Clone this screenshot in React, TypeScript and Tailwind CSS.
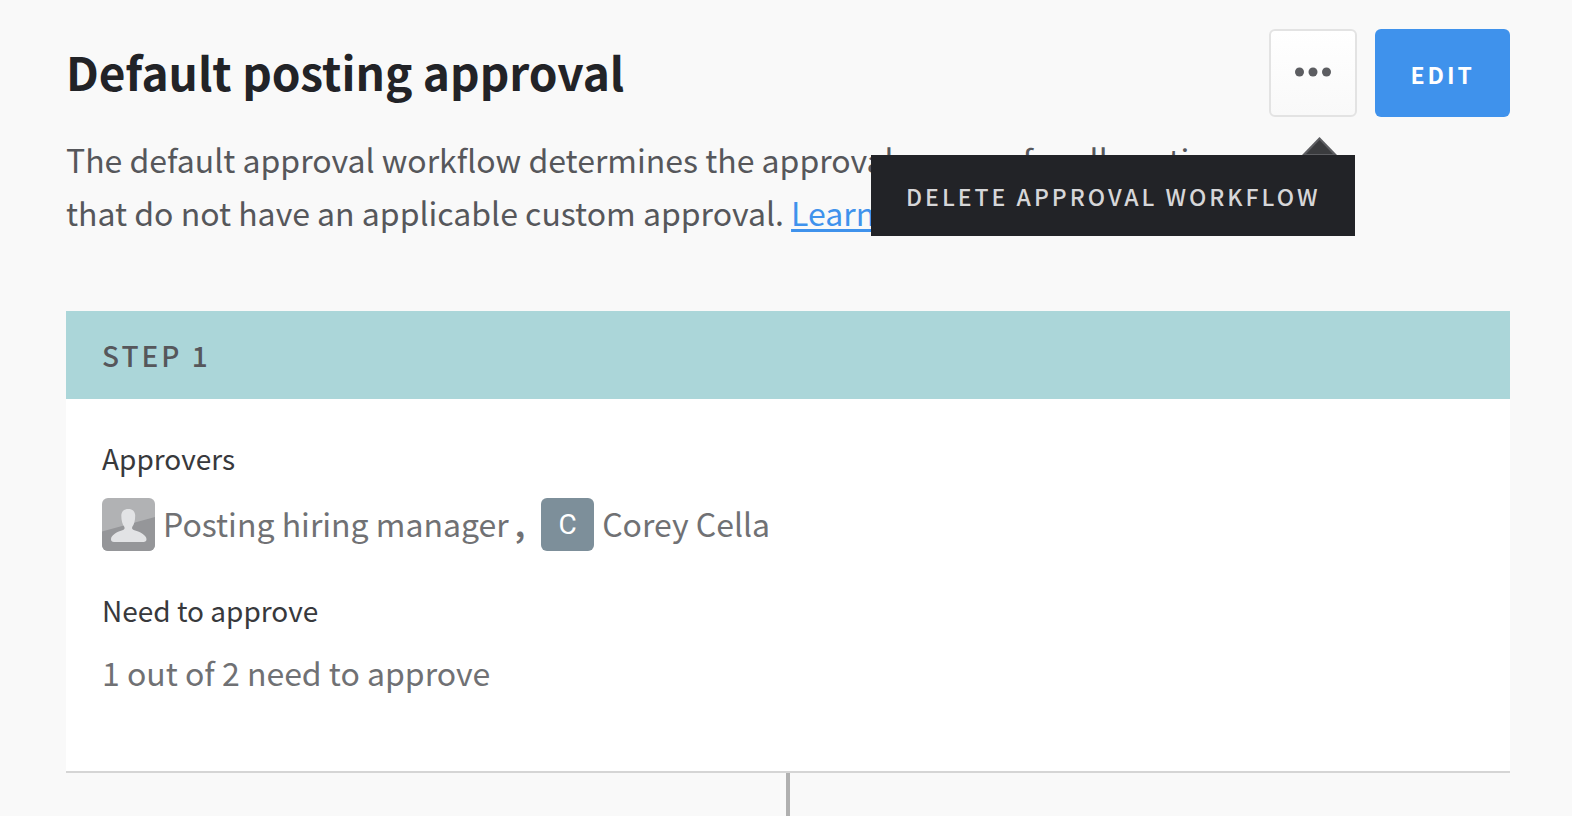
import { useState } from "react";

interface Approver {
  name: string;
  initial?: string;
}

interface StepProps {
  index: number;
  approvers: Approver[];
  required: number;
}

const APPROVERS: Approver[] = [
  { name: "Posting hiring manager" },
  { name: "Corey Cella", initial: "C" },
];

function Avatar({ initial }: { initial?: string }) {
  if (initial) {
    return (
      <span className="w-[53px] h-[53px] rounded-md bg-[#7d8f9a] text-white font-[Roboto,sans-serif] text-[28px] leading-none flex items-center justify-center shrink-0">
        {initial}
      </span>
    );
  }

  return (
    <svg className="w-[53px] h-[53px] rounded-md shrink-0" viewBox="0 0 53 53" aria-hidden="true">
      <rect width="53" height="53" fill="#b1b2b4" />
      <path d="M0 33.5L53 19V53H0Z" fill="#959699" />
      <path
        d="M26.3 11C30.6 11 33.2 13.6 33.2 17.6C33.2 22.4 32.3 26.6 30.2 29C29.6 30.8 30.6 31.6 32.4 32.2C38.6 33.9 44.5 37.3 44.5 41.2C44.5 43 43.4 44 41.4 44H12C10 44 9 43 9 41.2C9 37.3 14.4 33.9 20.4 32.2C22.2 31.6 23 30.8 22.4 29C20.3 26.6 19.3 22.4 19.3 17.6C19.3 13.6 22 11 26.3 11Z"
        fill="#e2e3e5"
      />
    </svg>
  );
}

function Step({ index, approvers, required }: StepProps) {
  return (
    <section className="bg-white border-b-2 border-[#d5d5d5]">
      <h2 className="bg-[#abd6d9] px-9 h-[88px] flex items-center text-[28px] leading-9 font-medium tracking-[3px] text-[#56575b]">
        STEP {index}
      </h2>
      <div className="px-9 pt-[39px] pb-[72px]">
        <h3 className="text-[28px] leading-10 text-[#38393c]">Approvers</h3>
        <ul className="mt-5 flex items-center gap-4 text-[32px] text-[#707174]">
          {approvers.map((approver, i) => (
            <li key={approver.name} className="flex items-center gap-2">
              <Avatar initial={approver.initial} />
              <span className="pb-1 leading-[48px]">
                {approver.name}
                {i < approvers.length - 1 && <span className="ml-1.5 font-bold">,</span>}
              </span>
            </li>
          ))}
        </ul>
        <h3 className="mt-[39px] text-[28px] leading-10 text-[#38393c]">Need to approve</h3>
        <p className="mt-4 text-[32px] leading-[53px] text-[#707174]">
          {required} out of {approvers.length} need to approve
        </p>
      </div>
    </section>
  );
}

export default function App() {
  const [open, setOpen] = useState(true);

  return (
    <main className="min-h-screen bg-[#f9f9f9] pl-[66px] pr-[62px] pt-[29px] font-['Noto_Sans_CJK_SC','Open_Sans',sans-serif]">
      <header className="flex items-start justify-between">
        <h1 className="h-[88px] pb-1 flex items-center text-[46px] leading-[64px] font-bold text-[#222327]">
          Default posting approval
        </h1>
        <div className="flex gap-[18px]">
          <div className="relative">
            <button
              type="button"
              aria-label="More actions"
              aria-expanded={open}
              onClick={() => setOpen(!open)}
              className="w-[88px] h-[88px] pb-0.5 rounded-md border-2 border-[#e3e3e3] bg-linear-to-b from-white to-[#f9f9f9] flex items-center justify-center"
            >
              <svg width="36" height="10" viewBox="0 0 36 10" fill="#5c5d61">
                <circle cx="4.5" cy="5" r="4.5" />
                <circle cx="18" cy="5" r="4.5" />
                <circle cx="31.5" cy="5" r="4.5" />
              </svg>
            </button>
            {open && (
              <div className="absolute right-0.5 top-full pt-5 z-10 flex flex-col items-end">
                <svg className="mr-[18px]" width="35" height="18" viewBox="0 0 35 18">
                  <path d="M17.5 0L35 18H0Z" fill="#5c5d61" />
                  <path d="M17.5 3L31 17H4Z" fill="#3a3b3e" />
                </svg>
                <button
                  type="button"
                  className="h-[81px] px-[35px] pt-0.5 bg-[#222327] text-[23px] font-medium tracking-[3px] text-[#d6d6d8] whitespace-nowrap"
                >
                  DELETE APPROVAL WORKFLOW
                </button>
              </div>
            )}
          </div>
          <button
            type="button"
            className="h-[88px] px-[35px] pt-0.5 rounded-md bg-[#3f92ec] text-[23px] font-bold tracking-[3px] text-white"
          >
            EDIT
          </button>
        </div>
      </header>

      <p className="mt-4 max-w-[1200px] text-[32px] leading-[53px] text-[#56575b]">
        The default approval workflow determines the approval process for all postings that do not have an
        applicable custom approval.{" "}
        <a href="#learn-more" className="text-[#3f92ec] underline decoration-3 underline-offset-3">
          Learn more
        </a>
      </p>

      <div className="mt-[72px]">
        <Step index={1} approvers={APPROVERS} required={1} />
        <div className="mx-auto w-1 h-[43px] bg-[#b0b0b0]" />
      </div>
    </main>
  );
}
